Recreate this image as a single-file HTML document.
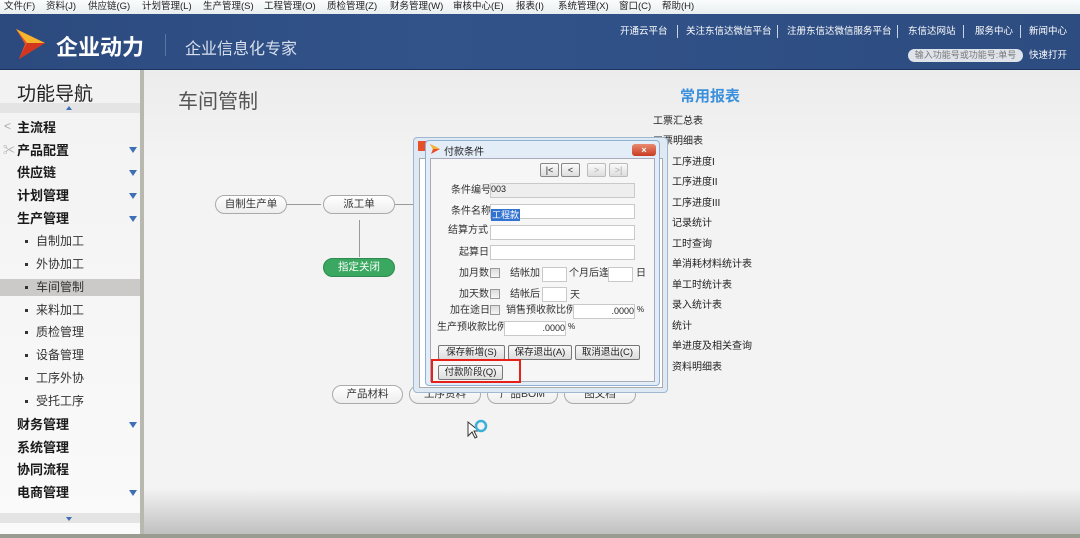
<!DOCTYPE html>
<html><head><meta charset="utf-8"><style>
*{margin:0;padding:0;box-sizing:border-box}
body{width:1080px;height:538px;overflow:hidden;position:relative;background:#f0f0f0;font-family:"Liberation Sans","Noto Sans CJK SC",sans-serif;color:#222}
.a{position:absolute;white-space:nowrap}
#menu{left:0;top:0;width:1080px;height:14px;background:linear-gradient(#fbfdfd,#e8eef0);font-size:9.5px;line-height:14px}
#hdr{left:0;top:14px;width:1080px;height:56px;background:linear-gradient(90deg,#2c4a7e,#31538a 40%,#2d4c80);border-bottom:1px solid #1c3460}
.lk{color:#fff;font-size:9.5px;top:11px;line-height:13px}
.sep{top:11px;width:1px;height:13px;background:#c8d4e8}
#side{left:0;top:70px;width:140px;height:465px;background:linear-gradient(#f2f2f2,#fafafa)}
.nav{left:17px;font-size:13px;font-weight:bold;color:#1a1a1a}
.sub{left:36px;font-size:12px;color:#333}
.dot{left:25px;width:3px;height:3px;background:#333}
.tri{left:129px;width:0;height:0;border-left:4px solid transparent;border-right:4px solid transparent;border-top:6px solid #3d6fb5}
.pill{height:19px;border:1px solid #aaa;border-radius:10px;background:linear-gradient(#fff,#eee);font-size:10.5px;text-align:center;line-height:17px;color:#333}
.lbl{font-size:10px;color:#333;line-height:12px}
.in{background:#fff;border:1px solid #c9c9c9;height:15px}
.cb{width:10px;height:10px;border:1px solid #999;background:linear-gradient(#ddd,#f5f5f5)}
.btn{height:15px;border:1px solid #777;border-radius:2px;background:linear-gradient(#f8f8f8,#ddd);font-size:9.5px;text-align:center;line-height:13px;color:#222}
.nb{width:19px;height:14px;border:1px solid #888;border-radius:2px;background:linear-gradient(#fafafa,#ddd);font-size:9px;text-align:center;line-height:12px}
.rp{font-size:10px;color:#222;left:672px}
</style></head><body>
<div id="menu" class="a">
<span class="a" style="left:4px">文件(F)</span><span class="a" style="left:46px">资料(J)</span><span class="a" style="left:88px">供应链(G)</span><span class="a" style="left:142px">计划管理(L)</span><span class="a" style="left:203px">生产管理(S)</span><span class="a" style="left:264px">工程管理(O)</span><span class="a" style="left:327px">质检管理(Z)</span><span class="a" style="left:390px">财务管理(W)</span><span class="a" style="left:453px">审核中心(E)</span><span class="a" style="left:516px">报表(I)</span><span class="a" style="left:558px">系统管理(X)</span><span class="a" style="left:619px">窗口(C)</span><span class="a" style="left:662px">帮助(H)</span>
</div>
<div id="hdr" class="a">
<svg class="a" style="left:13px;top:13px" width="34" height="34" viewBox="0 0 34 34"><path d="M3 2 L32 16 L6 32 L12 17 Z" fill="#e8502a"/><path d="M3 2 L32 16 L14 16 Z" fill="#f6b52e"/><path d="M14 16 L32 16 L6 32 Z" fill="#d2361f"/></svg>
<span class="a" style="left:56px;top:16px;font-size:22px;font-weight:bold;color:#fff">企业动力</span>
<div class="a" style="left:165px;top:20px;width:1px;height:22px;background:#5a75a3"></div>
<span class="a" style="left:185px;top:21px;font-size:16px;color:#d8e0ee">企业信息化专家</span>
<span class="a lk" style="left:620px">开通云平台</span><div class="a sep" style="left:677px"></div>
<span class="a lk" style="left:686px">关注东信达微信平台</span><div class="a sep" style="left:777px"></div>
<span class="a lk" style="left:787px">注册东信达微信服务平台</span><div class="a sep" style="left:897px"></div>
<span class="a lk" style="left:908px">东信达网站</span><div class="a sep" style="left:963px"></div>
<span class="a lk" style="left:975px">服务中心</span><div class="a sep" style="left:1020px"></div>
<span class="a lk" style="left:1029px">新闻中心</span>
<div class="a" style="left:908px;top:35px;width:115px;height:13px;border-radius:7px;background:#dfe3ea;font-size:9px;color:#777;line-height:13px;text-align:center">输入功能号或功能号:单号</div>
<span class="a lk" style="left:1029px;top:35px">快速打开</span>
</div>
<div id="side" class="a">
<span class="a" style="left:17px;top:9px;font-size:19px;color:#222">功能导航</span>
<div class="a" style="left:0;top:33px;width:140px;height:10px;background:#e4e4e4"></div>
<div class="a" style="left:66px;top:36px;border-left:3px solid transparent;border-right:3px solid transparent;border-bottom:4px solid #3d6fb5"></div>
<div class="a" style="left:0;top:209px;width:140px;height:17px;background:#ccc9c9"></div>
<div class="a" style="left:0;top:443px;width:140px;height:10px;background:#e4e4e4"></div>
<div class="a" style="left:66px;top:447px;border-left:3px solid transparent;border-right:3px solid transparent;border-top:4px solid #3d6fb5"></div>
</div>
<div class="a" style="left:140px;top:70px;width:4px;height:465px;background:#b8b8b0"></div>
<span class="a" style="left:4px;top:119px;color:#aaa;font-size:12px">&lt;</span>
<span class="a" style="left:3px;top:141px;color:#aaa;font-size:12px">✂</span>
<span class="a nav" style="top:117px">主流程</span>
<span class="a nav" style="top:140px">产品配置</span><div class="a tri" style="top:147px"></div>
<span class="a nav" style="top:162px">供应链</span><div class="a tri" style="top:170px"></div>
<span class="a nav" style="top:185px">计划管理</span><div class="a tri" style="top:193px"></div>
<span class="a nav" style="top:208px">生产管理</span><div class="a tri" style="top:216px"></div>
<div class="a dot" style="top:240px"></div><span class="a sub" style="top:232px">自制加工</span>
<div class="a dot" style="top:263px"></div><span class="a sub" style="top:255px">外协加工</span>
<div class="a dot" style="top:286px"></div><span class="a sub" style="top:278px">车间管制</span>
<div class="a dot" style="top:309px"></div><span class="a sub" style="top:301px">来料加工</span>
<div class="a dot" style="top:331px"></div><span class="a sub" style="top:323px">质检管理</span>
<div class="a dot" style="top:354px"></div><span class="a sub" style="top:346px">设备管理</span>
<div class="a dot" style="top:377px"></div><span class="a sub" style="top:369px">工序外协</span>
<div class="a dot" style="top:400px"></div><span class="a sub" style="top:392px">受托工序</span>
<span class="a nav" style="top:414px">财务管理</span><div class="a tri" style="top:422px"></div>
<span class="a nav" style="top:437px">系统管理</span>
<span class="a nav" style="top:459px">协同流程</span>
<span class="a nav" style="top:482px">电商管理</span><div class="a tri" style="top:490px"></div>
<div class="a" style="left:144px;top:70px;width:936px;height:465px;background:linear-gradient(#ececec,#f3f3f3 20%,#f3f3f3 90%,#c0bfc0)"></div>
<div class="a" style="left:0;top:534px;width:1080px;height:4px;background:#9a9c92"></div>
<span class="a" style="left:178px;top:85px;font-size:20px;color:#555">车间管制</span>
<span class="a" style="left:680px;top:85px;font-size:15px;font-weight:bold;color:#3a90dc">常用报表</span>
<span class="a rp" style="left:653px;top:112px">工票汇总表</span>
<span class="a rp" style="left:653px;top:132px">工票明细表</span>
<span class="a rp" style="top:153px">工序进度I</span>
<span class="a rp" style="top:173px">工序进度II</span>
<span class="a rp" style="top:194px">工序进度III</span>
<span class="a rp" style="top:214px">记录统计</span>
<span class="a rp" style="top:235px">工时查询</span>
<span class="a rp" style="top:255px">单消耗材料统计表</span>
<span class="a rp" style="top:276px">单工时统计表</span>
<span class="a rp" style="top:296px">录入统计表</span>
<span class="a rp" style="top:317px">统计</span>
<span class="a rp" style="top:337px">单进度及相关查询</span>
<span class="a rp" style="top:358px">资料明细表</span>
<div class="a pill" style="left:215px;top:195px;width:72px">自制生产单</div>
<div class="a" style="left:287px;top:204px;width:34px;height:1px;background:#999"></div>
<div class="a pill" style="left:323px;top:195px;width:72px">派工单</div>
<div class="a" style="left:395px;top:204px;width:20px;height:1px;background:#999"></div>
<div class="a" style="left:359px;top:220px;width:1px;height:37px;background:#999"></div>
<div class="a pill" style="left:323px;top:258px;width:72px;background:#3aa860;border-color:#2e8a4e;color:#fff">指定关闭</div>
<div class="a pill" style="left:332px;top:385px;width:71px">产品材料</div>
<div class="a pill" style="left:409px;top:385px;width:72px">工序资料</div>
<div class="a pill" style="left:487px;top:385px;width:71px">产品BOM</div>
<div class="a pill" style="left:564px;top:385px;width:72px">图文档</div>
<svg class="a" style="left:466px;top:418px" width="22" height="22"><path d="M2 4 L2 18 L6 14 L9 20 L11 19 L8 13 L13 13 Z" fill="#fff" stroke="#333"/><circle cx="15" cy="8" r="5" fill="none" stroke="#3ab0d8" stroke-width="2.5"/></svg>
<div class="a" style="left:413px;top:137px;width:255px;height:256px;border:1px solid #9fb7cf;border-radius:4px;background:#dfe9f3"></div>
<div class="a" style="left:419px;top:158px;width:244px;height:230px;background:#fff;border:1px solid #aaa"></div>
<div class="a" style="left:418px;top:141px;width:8px;height:10px;background:#e8502a"></div>
<div class="a" style="left:425px;top:140px;width:235px;height:246px;border:1px solid #8fb0d4;border-radius:4px;background:#e3edf7"></div>
<svg class="a" style="left:429px;top:143px" width="12" height="12"><path d="M1 1 L11 6 L2 11 L4 6Z" fill="#e8502a"/><path d="M1 1 L11 6 L4 6Z" fill="#f6b52e"/></svg>
<span class="a" style="left:444px;top:143px;font-size:10px;color:#222">付款条件</span>
<div class="a" style="left:632px;top:144px;width:24px;height:12px;border-radius:3px;background:linear-gradient(#e88a70,#c83c22);color:#fff;font-size:9px;text-align:center;line-height:12px;font-weight:bold">×</div>
<div class="a" style="left:430px;top:158px;width:225px;height:224px;background:#f6f6f6;border:1px solid #aab"></div>
<div class="a nb" style="left:540px;top:163px">|&lt;</div>
<div class="a nb" style="left:561px;top:163px">&lt;</div>
<div class="a nb" style="left:587px;top:163px;color:#aaa;border-color:#bbb">&gt;</div>
<div class="a nb" style="left:609px;top:163px;color:#aaa;border-color:#bbb">&gt;|</div>
<span class="a lbl" style="left:451px;top:185px">条件编号</span><div class="a in" style="left:490px;top:183px;width:145px;background:#eee;font-size:9px;line-height:10px">003</div>
<span class="a lbl" style="left:451px;top:206px">条件名称</span><div class="a in" style="left:490px;top:204px;width:145px"><span style="background:#3272d0;color:#fff;font-size:9px;line-height:12px;display:inline-block;padding:0 1px">工程款</span></div>
<span class="a lbl" style="left:448px;top:225px">结算方式</span><div class="a in" style="left:490px;top:225px;width:145px"></div>
<span class="a lbl" style="left:459px;top:247px">起算日</span><div class="a in" style="left:490px;top:245px;width:145px"></div>
<span class="a lbl" style="left:459px;top:268px">加月数</span><div class="a cb" style="left:490px;top:268px"></div>
<span class="a lbl" style="left:510px;top:268px">结帐加</span><div class="a in" style="left:542px;top:267px;width:25px"></div>
<span class="a lbl" style="left:569px;top:268px">个月后逢</span><div class="a in" style="left:608px;top:267px;width:25px"></div><span class="a lbl" style="left:636px;top:268px">日</span>
<span class="a lbl" style="left:459px;top:289px">加天数</span><div class="a cb" style="left:490px;top:289px"></div>
<span class="a lbl" style="left:510px;top:289px">结帐后</span><div class="a in" style="left:542px;top:287px;width:25px"></div><span class="a lbl" style="left:570px;top:290px">天</span>
<span class="a lbl" style="left:450px;top:305px">加在途日</span><div class="a cb" style="left:490px;top:305px"></div>
<span class="a lbl" style="left:506px;top:305px">销售预收款比例</span><div class="a in" style="left:573px;top:304px;width:62px;font-size:9px;text-align:right;line-height:12px">.0000</div><span class="a" style="left:637px;top:305px;font-size:8px">%</span>
<span class="a lbl" style="left:437px;top:322px">生产预收款比例</span><div class="a in" style="left:504px;top:321px;width:62px;font-size:9px;text-align:right;line-height:12px">.0000</div><span class="a" style="left:568px;top:322px;font-size:8px">%</span>
<div class="a btn" style="left:438px;top:345px;width:67px">保存新增(S)</div>
<div class="a btn" style="left:508px;top:345px;width:64px">保存退出(A)</div>
<div class="a btn" style="left:575px;top:345px;width:65px">取消退出(C)</div>
<div class="a btn" style="left:438px;top:365px;width:65px">付款阶段(Q)</div>
<div class="a" style="left:431px;top:359px;width:90px;height:24px;border:2px solid #e8201a"></div>
</body></html>
